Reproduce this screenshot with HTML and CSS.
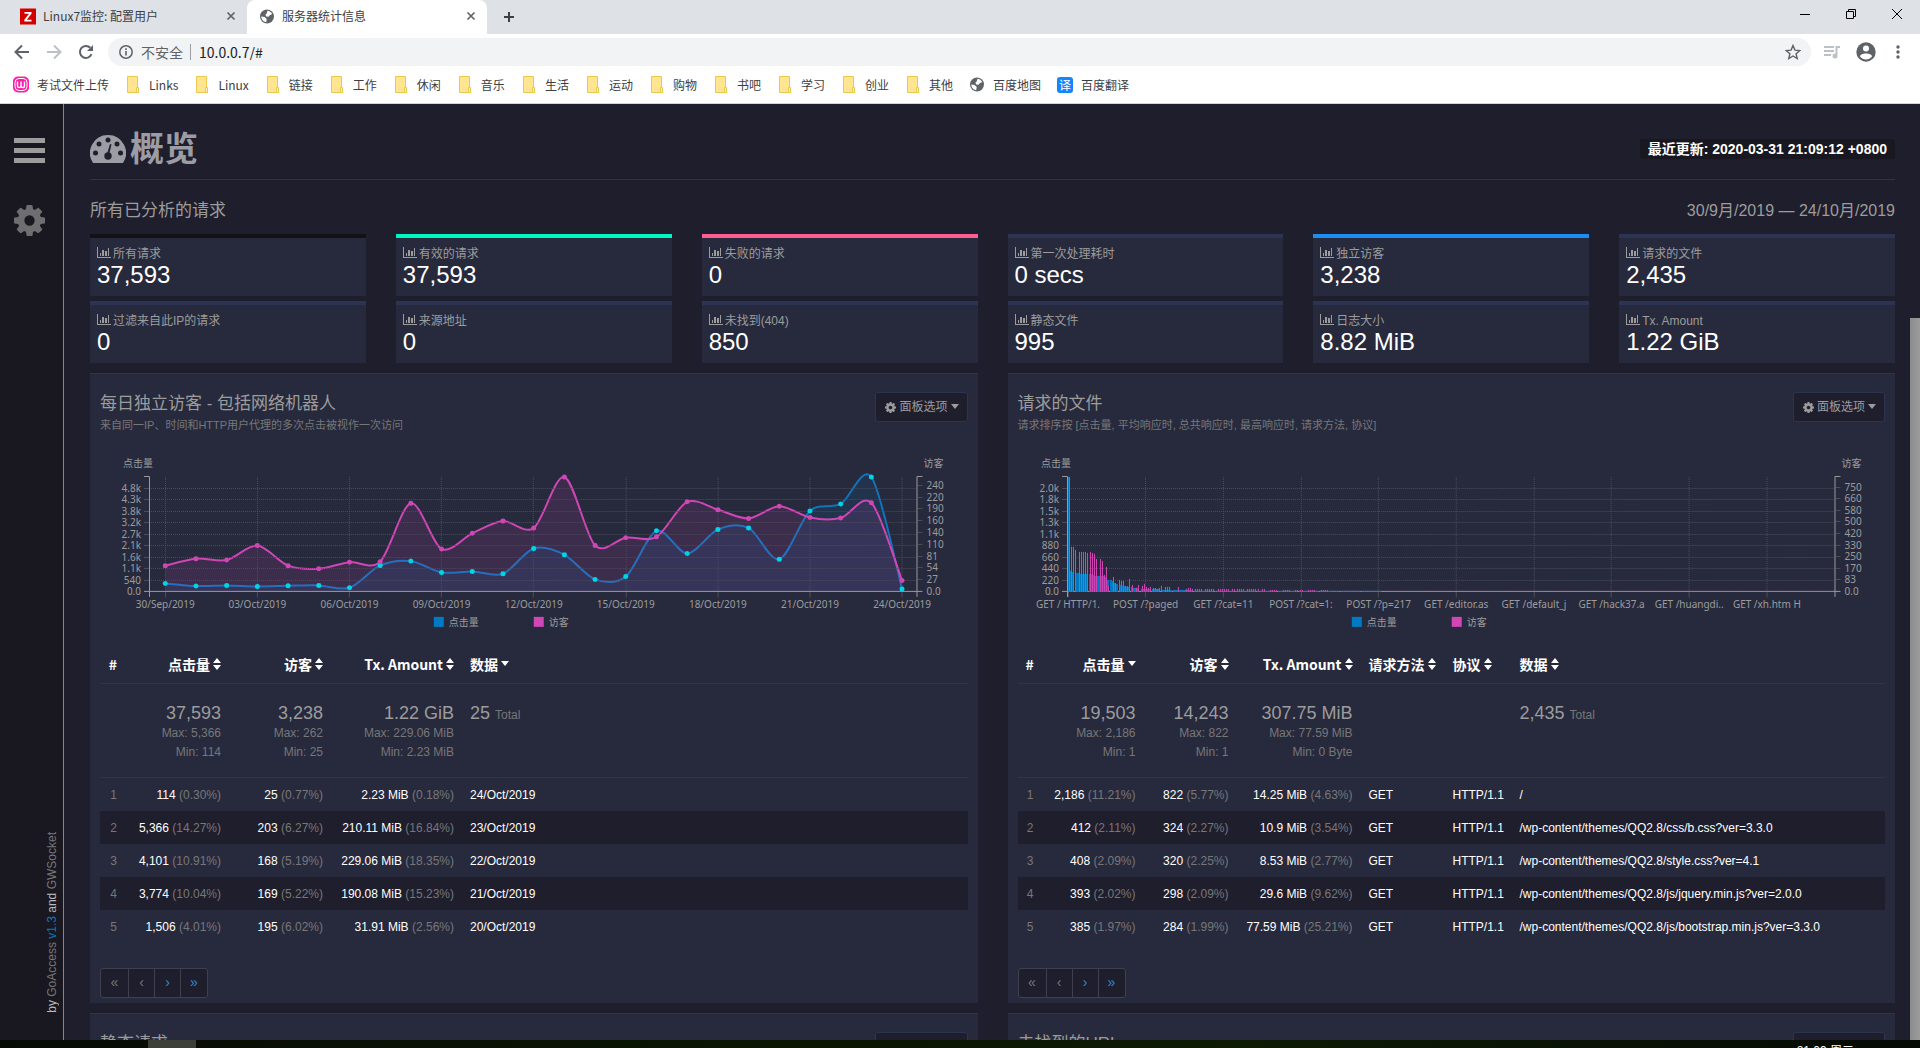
FILE: index.html
```html
<!DOCTYPE html>
<html lang="zh-CN">
<head>
<meta charset="utf-8">
<title>服务器统计信息</title>
<link rel="stylesheet" href="styles.css">
</head>
<body>
<svg class="defs" aria-hidden="true">
  <symbol id="i-cog" viewBox="128 128 1536 1536"><path d="M1152 896q0-106-75-181t-181-75-181 75-75 181 75 181 181 75 181-75 75-181zm512-109v222q0 12-8 23t-20 13l-185 28q-19 54-39 91 35 50 107 138 10 12 10 25t-9 23q-27 37-99 108t-94 71q-12 0-26-9l-138-108q-44 23-91 38-16 136-29 186-7 28-36 28h-222q-14 0-24.500-8.500t-11.500-21.500l-28-184q-49-16-90-37l-141 107q-10 9-25 9-14 0-25-11-126-114-165-168-7-10-7-23 0-12 8-23 15-21 51-66.500t54-70.500q-27-50-41-99l-183-27q-13-2-21-12.500t-8-23.500v-222q0-12 8-23t19-13l186-28q14-46 39-92-40-57-107-138-10-12-10-24 0-10 9-23 26-36 98.500-107.500t94.500-71.500q13 0 26 10l138 107q44-23 91-38 16-136 29-186 7-28 36-28h222q14 0 24.500 8.500t11.500 21.500l28 184q49 16 90 37l142-107q9-9 24-9 13 0 25 10 129 119 165 170 7 8 7 22 0 12-8 23-15 21-51 66.500t-54 70.500q26 50 41 98l183 28q13 2 21 12.500t8 23.500z"/></symbol>
  <symbol id="i-bars" viewBox="0 0 14 11"><path d="M0 0h1v10h13v1H0zM3 6h1v3H3zM5 3h2v6H5zM8 4h2v5H8zM11 1h1v8h-1z"/></symbol>
  <symbol id="i-folder" viewBox="0 0 16 17"><path d="M2.500.5h10v13l1 3h-11z" fill="#ffe592" stroke="#ecc84c"/><path d="M11.500 11.500h2v5h-2z" fill="#fff0b8" stroke="#ecc84c"/></symbol>
  <symbol id="i-globe" viewBox="0 0 16 16"><circle cx="8" cy="8" r="7" fill="#5f6368"/><path d="M8.500 2.200c2 .2 3.800 1.500 4.700 3.300l-2.400 1.200-1.300 1.600-2.300-.3-.8-1.700 1.300-1.400z" fill="#fff"/><path d="M2.200 8l3.500.6 2 2-.5 3.100C4.300 13.300 2.200 11 2.200 8z" fill="#fff"/></symbol>
  <symbol id="i-x" viewBox="0 0 10 10"><path d="M1.500 1.500l7 7M8.500 1.500l-7 7" fill="none" stroke="currentColor" stroke-width="1.700"/></symbol>
  <symbol id="i-sort" viewBox="0 0 8 12"><path d="M4 0l4 5H0zM0 7h8l-4 5z"/></symbol>
  <symbol id="i-down" viewBox="0 0 8 12"><path d="M0 3h8l-4 5z"/></symbol>
</svg>

<header class="browser">
  <div class="tabs">
    <div class="tab">
      <svg class="fav" viewBox="0 0 16 16"><path d="M0 0h16v16H0z" fill="#d40000"/><path d="M4.500 3.500h7v1.700l-4.700 6h4.700v1.800h-7.200v-1.700l4.700-6H4.500z" fill="#fff"/></svg>
      <span class="tab-title">Linux7监控: 配置用户</span>
      <button class="plain" aria-label="关闭"><svg width="10" height="10"><use href="#i-x"/></svg></button>
    </div>
    <div class="tab active">
      <svg class="fav"><use href="#i-globe"/></svg>
      <span class="tab-title">服务器统计信息</span>
      <button class="plain" aria-label="关闭"><svg width="10" height="10"><use href="#i-x"/></svg></button>
    </div>
    <button class="plain new-tab" aria-label="新标签页"><svg width="12" height="12" viewBox="0 0 12 12"><path d="M6 1v10M1 6h10" stroke="#3c4043" stroke-width="2"/></svg></button>
    <div class="window-buttons">
      <button class="plain" aria-label="最小化"><svg width="10" height="10" viewBox="0 0 10 10"><path d="M0 5.500h10" stroke="#000"/></svg></button>
      <button class="plain" aria-label="还原"><svg width="10" height="10" viewBox="0 0 10 10"><path d="M.5 2.500h7v7h-7zM2.500 2.500v-2h7v7h-2" fill="none" stroke="#000"/></svg></button>
      <button class="plain" aria-label="关闭窗口"><svg width="10" height="10" viewBox="0 0 10 10"><path d="M0 0l10 10M10 0L0 10" stroke="#000"/></svg></button>
    </div>
  </div>
  <div class="toolbar">
    <button class="plain nav" aria-label="后退"><svg width="16" height="16" viewBox="0 0 16 16"><path d="M15 8H2M8 1.500L1.500 8 8 14.500" fill="none" stroke="#5f6368" stroke-width="2"/></svg></button>
    <button class="plain nav" aria-label="前进"><svg width="16" height="16" viewBox="0 0 16 16"><path d="M1 8h13M8 1.500L14.500 8 8 14.500" fill="none" stroke="#bdc1c6" stroke-width="2"/></svg></button>
    <button class="plain nav" aria-label="重新加载"><svg width="16" height="16" viewBox="0 0 16 16"><path d="M13.500 10.200A6 6 0 1 1 12.300 3.800" fill="none" stroke="#5f6368" stroke-width="2"/><path d="M15 1v6H9z" fill="#5f6368"/></svg></button>
    <div class="omnibox">
      <svg width="14" height="14" viewBox="0 0 14 14"><circle cx="7" cy="7" r="6.200" fill="none" stroke="#5f6368" stroke-width="1.500"/><path d="M6.200 3.300h1.600v1.600H6.200zM6.200 6h1.600v4.500H6.200z" fill="#5f6368"/></svg>
      <label for="url">不安全</label>
      <input id="url" type="text" value="10.0.0.7/#">
      <button class="plain" aria-label="添加书签"><svg width="16" height="16" viewBox="0 0 16 16"><path d="M8 1.500l1.900 4.600 4.900.4-3.700 3.200 1.100 4.800L8 12l-4.200 2.500 1.100-4.800L1.200 6.500l4.900-.4z" fill="none" stroke="#5f6368" stroke-width="1.400"/></svg></button>
    </div>
    <button class="plain" aria-label="播放列表"><svg width="16" height="14" viewBox="0 0 16 14"><path d="M0 2h10M0 6h10M0 10h7M16 2h-3.500v8" fill="none" stroke="#bdc1c6" stroke-width="2"/><circle cx="11" cy="11" r="2.500" fill="#bdc1c6"/></svg></button>
    <button class="plain" aria-label="用户"><svg width="20" height="20" viewBox="0 0 20 20"><circle cx="10" cy="10" r="9.700" fill="#5f6368"/><circle cx="10" cy="6.500" r="3" fill="#fff"/><path d="M4 14.500c0-4 12-4 12 0-3 4-9 4-12 0z" fill="#fff"/></svg></button>
    <button class="plain menu" aria-label="菜单"><svg width="4" height="14" viewBox="0 0 4 14"><g fill="#5f6368"><circle cx="2" cy="2" r="1.700"/><circle cx="2" cy="7" r="1.700"/><circle cx="2" cy="12" r="1.700"/></g></svg></button>
  </div>
  <nav class="bookmarks">
    <a href="#"><svg class="fav" viewBox="0 0 16 16"><rect width="16" height="16" rx="5" fill="#f91fa8"/><rect x="2" y="2" width="12" height="12" rx="4" fill="none" stroke="#fff"/><path d="M4.500 5v4.500q0 1.500 1.700 1.500T8 9.500V5v4.500Q8 11 9.800 11t1.700-1.500V5" fill="none" stroke="#fff" stroke-width="1.400"/></svg>考试文件上传</a>
    <a href="#"><svg class="fav"><use href="#i-folder"/></svg>Links</a>
    <a href="#"><svg class="fav"><use href="#i-folder"/></svg>Linux</a>
    <a href="#"><svg class="fav"><use href="#i-folder"/></svg>链接</a>
    <a href="#"><svg class="fav"><use href="#i-folder"/></svg>工作</a>
    <a href="#"><svg class="fav"><use href="#i-folder"/></svg>休闲</a>
    <a href="#"><svg class="fav"><use href="#i-folder"/></svg>音乐</a>
    <a href="#"><svg class="fav"><use href="#i-folder"/></svg>生活</a>
    <a href="#"><svg class="fav"><use href="#i-folder"/></svg>运动</a>
    <a href="#"><svg class="fav"><use href="#i-folder"/></svg>购物</a>
    <a href="#"><svg class="fav"><use href="#i-folder"/></svg>书吧</a>
    <a href="#"><svg class="fav"><use href="#i-folder"/></svg>学习</a>
    <a href="#"><svg class="fav"><use href="#i-folder"/></svg>创业</a>
    <a href="#"><svg class="fav"><use href="#i-folder"/></svg>其他</a>
    <a href="#"><svg class="fav"><use href="#i-globe"/></svg>百度地图</a>
    <a href="#"><span class="fav yi">译</span>百度翻译</a>
  </nav>
</header>

<div class="page">
  <aside class="sidebar">
    <button class="plain" aria-label="导航"><svg width="31" height="25" viewBox="0 0 31 25"><path d="M0 0h31v5H0zM0 10h31v5H0zM0 20h31v5H0z" fill="#9c9c9c"/></svg></button>
    <button class="plain gear" aria-label="设置"><svg width="31" height="31"><use href="#i-cog"/></svg></button>
    <p class="credit">by <a href="#">GoAccess</a> <a href="#" class="ver">v1.3</a> and <a href="#">GWSocket</a></p>
  </aside>

  <main class="main">
    <div class="page-head">
      <h1><svg width="36" height="28" viewBox="0 0 36 28"><path d="M18 0A18 18 0 0 0 3 28H33A18 18 0 0 0 18 0z" fill="#9c9ca4"/><g fill="#1f1e2d"><circle cx="5.500" cy="18" r="2.500"/><circle cx="9" cy="9" r="2.500"/><circle cx="18" cy="5" r="2.500"/><circle cx="27" cy="9" r="2.500"/><circle cx="30.500" cy="18" r="2.500"/><circle cx="18" cy="21" r="3.700"/><path d="M17 19l3-10 1.500.5L19 20z"/></g></svg>概览</h1>
      <span class="updated">最近更新: 2020-03-31 21:09:12 +0800</span>
    </div>
    <div class="range"><h2>所有已分析的请求</h2><span>30/9月/2019 — 24/10月/2019</span></div>

    <section class="stats">
      <div class="stat black"><span><svg><use href="#i-bars"/></svg>所有请求</span><b>37,593</b></div>
      <div class="stat green"><span><svg><use href="#i-bars"/></svg>有效的请求</span><b>37,593</b></div>
      <div class="stat red"><span><svg><use href="#i-bars"/></svg>失败的请求</span><b>0</b></div>
      <div class="stat"><span><svg><use href="#i-bars"/></svg>第一次处理耗时</span><b>0 secs</b></div>
      <div class="stat blue"><span><svg><use href="#i-bars"/></svg>独立访客</span><b>3,238</b></div>
      <div class="stat"><span><svg><use href="#i-bars"/></svg>请求的文件</span><b>2,435</b></div>
      <div class="stat"><span><svg><use href="#i-bars"/></svg>过滤来自此IP的请求</span><b>0</b></div>
      <div class="stat"><span><svg><use href="#i-bars"/></svg>来源地址</span><b>0</b></div>
      <div class="stat"><span><svg><use href="#i-bars"/></svg>未找到(404)</span><b>850</b></div>
      <div class="stat"><span><svg><use href="#i-bars"/></svg>静态文件</span><b>995</b></div>
      <div class="stat"><span><svg><use href="#i-bars"/></svg>日志大小</span><b>8.82 MiB</b></div>
      <div class="stat"><span><svg><use href="#i-bars"/></svg>Tx. Amount</span><b>1.22 GiB</b></div>
    </section>

    <div class="panels">
      <section class="panel">
        <header class="panel-head">
          <div><h3>每日独立访客 - 包括网络机器人</h3><p>来自同一IP、时间和HTTP用户代理的多次点击被视作一次访问</p></div>
          <button class="options"><svg class="cog"><use href="#i-cog"/></svg>面板选项<svg class="caret"><use href="#i-down"/></svg></button>
        </header>
        <svg class="chart" id="chart-visitors" viewBox="0 0 868 190" role="img" aria-label="每日独立访客"></svg>
        <table class="visitors">
          <colgroup><col class="c-n"><col class="c-hits"><col class="c-vis"><col class="c-amt"><col></colgroup>
          <thead>
            <tr><th class="r">#</th><th class="r">点击量<svg><use href="#i-sort"/></svg></th><th class="r">访客<svg><use href="#i-sort"/></svg></th><th class="r">Tx. Amount<svg><use href="#i-sort"/></svg></th><th>数据<svg><use href="#i-down"/></svg></th></tr>
          </thead>
          <tbody>
            <tr class="sum"><td></td><td class="r"><b>37,593</b><i>Max: 5,366</i><i>Min: 114</i></td><td class="r"><b>3,238</b><i>Max: 262</i><i>Min: 25</i></td><td class="r"><b>1.22 GiB</b><i>Max: 229.06 MiB</i><i>Min: 2.23 MiB</i></td><td><b>25 <small>Total</small></b></td></tr>
            <tr><td class="r"><em>1</em></td><td class="r">114 <em>(0.30%)</em></td><td class="r">25 <em>(0.77%)</em></td><td class="r">2.23 MiB <em>(0.18%)</em></td><td>24/Oct/2019</td></tr>
            <tr class="alt"><td class="r"><em>2</em></td><td class="r">5,366 <em>(14.27%)</em></td><td class="r">203 <em>(6.27%)</em></td><td class="r">210.11 MiB <em>(16.84%)</em></td><td>23/Oct/2019</td></tr>
            <tr><td class="r"><em>3</em></td><td class="r">4,101 <em>(10.91%)</em></td><td class="r">168 <em>(5.19%)</em></td><td class="r">229.06 MiB <em>(18.35%)</em></td><td>22/Oct/2019</td></tr>
            <tr class="alt"><td class="r"><em>4</em></td><td class="r">3,774 <em>(10.04%)</em></td><td class="r">169 <em>(5.22%)</em></td><td class="r">190.08 MiB <em>(15.23%)</em></td><td>21/Oct/2019</td></tr>
            <tr><td class="r"><em>5</em></td><td class="r">1,506 <em>(4.01%)</em></td><td class="r">195 <em>(6.02%)</em></td><td class="r">31.91 MiB <em>(2.56%)</em></td><td>20/Oct/2019</td></tr>
          </tbody>
        </table>
        <nav class="pager"><a href="#" class="off">«</a><a href="#" class="off">‹</a><a href="#">›</a><a href="#">»</a></nav>
      </section>

      <section class="panel">
        <header class="panel-head">
          <div><h3>请求的文件</h3><p>请求排序按 [点击量, 平均响应时, 总共响应时, 最高响应时, 请求方法, 协议]</p></div>
          <button class="options"><svg class="cog"><use href="#i-cog"/></svg>面板选项<svg class="caret"><use href="#i-down"/></svg></button>
        </header>
        <svg class="chart" id="chart-requests" viewBox="0 0 868 190" role="img" aria-label="请求的文件"></svg>
        <table class="requests">
          <colgroup><col class="c-n"><col class="c-hits"><col class="c-vis"><col class="c-amt"><col class="c-mtd"><col class="c-pro"><col></colgroup>
          <thead>
            <tr><th class="r">#</th><th class="r">点击量<svg><use href="#i-down"/></svg></th><th class="r">访客<svg><use href="#i-sort"/></svg></th><th class="r">Tx. Amount<svg><use href="#i-sort"/></svg></th><th>请求方法<svg><use href="#i-sort"/></svg></th><th>协议<svg><use href="#i-sort"/></svg></th><th>数据<svg><use href="#i-sort"/></svg></th></tr>
          </thead>
          <tbody>
            <tr class="sum"><td></td><td class="r"><b>19,503</b><i>Max: 2,186</i><i>Min: 1</i></td><td class="r"><b>14,243</b><i>Max: 822</i><i>Min: 1</i></td><td class="r"><b>307.75 MiB</b><i>Max: 77.59 MiB</i><i>Min: 0 Byte</i></td><td></td><td></td><td><b>2,435 <small>Total</small></b></td></tr>
            <tr><td class="r"><em>1</em></td><td class="r">2,186 <em>(11.21%)</em></td><td class="r">822 <em>(5.77%)</em></td><td class="r">14.25 MiB <em>(4.63%)</em></td><td>GET</td><td>HTTP/1.1</td><td>/</td></tr>
            <tr class="alt"><td class="r"><em>2</em></td><td class="r">412 <em>(2.11%)</em></td><td class="r">324 <em>(2.27%)</em></td><td class="r">10.9 MiB <em>(3.54%)</em></td><td>GET</td><td>HTTP/1.1</td><td>/wp-content/themes/QQ2.8/css/b.css?ver=3.3.0</td></tr>
            <tr><td class="r"><em>3</em></td><td class="r">408 <em>(2.09%)</em></td><td class="r">320 <em>(2.25%)</em></td><td class="r">8.53 MiB <em>(2.77%)</em></td><td>GET</td><td>HTTP/1.1</td><td>/wp-content/themes/QQ2.8/style.css?ver=4.1</td></tr>
            <tr class="alt"><td class="r"><em>4</em></td><td class="r">393 <em>(2.02%)</em></td><td class="r">298 <em>(2.09%)</em></td><td class="r">29.6 MiB <em>(9.62%)</em></td><td>GET</td><td>HTTP/1.1</td><td>/wp-content/themes/QQ2.8/js/jquery.min.js?ver=2.0.0</td></tr>
            <tr><td class="r"><em>5</em></td><td class="r">385 <em>(1.97%)</em></td><td class="r">284 <em>(1.99%)</em></td><td class="r">77.59 MiB <em>(25.21%)</em></td><td>GET</td><td>HTTP/1.1</td><td>/wp-content/themes/QQ2.8/js/bootstrap.min.js?ver=3.3.0</td></tr>
          </tbody>
        </table>
        <nav class="pager"><a href="#" class="off">«</a><a href="#" class="off">‹</a><a href="#">›</a><a href="#">»</a></nav>
      </section>

      <section class="panel">
        <header class="panel-head"><div><h3>静态请求</h3></div><button class="options"><svg class="cog"><use href="#i-cog"/></svg>面板选项<svg class="caret"><use href="#i-down"/></svg></button></header>
      </section>
      <section class="panel">
        <header class="panel-head"><div><h3>未找到的URLs</h3></div><button class="options"><svg class="cog"><use href="#i-cog"/></svg>面板选项<svg class="caret"><use href="#i-down"/></svg></button></header>
      </section>
    </div>
  </main>
  <div class="scrollbar"><div class="thumb"></div></div>
</div>
<footer class="taskbar"><div class="task"></div><time>21:09 周二</time></footer>
<script src="charts.js"></script>
</body>
</html>
```
FILE: styles.css
```css
* { box-sizing: border-box; }
body {
  margin: 0;
  height: 100vh;
  display: flex;
  flex-direction: column;
  overflow: hidden;
  background: #1f1e2d;
  color: #9c9c9c;
  font: 12px/16px "Liberation Sans", "Noto Sans CJK SC", sans-serif;
}
h1, h2, h3, p { margin: 0; font-weight: 400; }
a { color: inherit; text-decoration: none; }
svg { display: block; flex: none; }
.defs { display: none; }
.plain { border: 0; padding: 0; background: none; color: #5f6368; }

/* browser window */
.browser {
  flex: none;
  background: #fff;
  color: #3c4043;
  font-family: "Noto Sans CJK SC", sans-serif;
  border-bottom: 1px solid #c9dbd9;
}
.tabs { display: flex; align-items: center; height: 34px; background: #dee1e6; }
.tab { display: flex; align-items: center; gap: 7px; width: 240px; height: 34px; padding: 0 11px 2px 12px; }
.tab:first-child { width: 247px; padding-left: 20px; }
.tab.active { background: #fff; border-radius: 8px 8px 0 0; }
.tab-title { flex: 1; }
.fav { width: 16px; height: 17px; flex: none; }
.new-tab { margin-left: 16px; }
.window-buttons { display: flex; gap: 36px; margin-left: auto; padding: 0 18px 6px 0; }
.toolbar { display: flex; align-items: center; height: 36px; padding: 0 20px 0 14px; gap: 16px; }
.omnibox { flex: 1; display: flex; align-items: center; height: 28px; margin: 0 -3px 0 -2px; padding: 0 10px 0 11px; gap: 8px; border-radius: 14px; background: #f1f3f4; }
.omnibox label { font-size: 14px; color: #5f6368; padding-right: 7px; border-right: 1px solid #9aa0a6; }
.omnibox input { flex: 1; border: 0; padding: 0; background: none; color: #202124; font: 14px/16px "Noto Sans CJK SC", sans-serif; outline: 0; }
.toolbar .menu { margin-left: 4px; }
.bookmarks { display: flex; align-items: center; height: 33px; padding: 0 13px 4px; gap: 16px; }
.bookmarks a { display: flex; align-items: center; gap: 8px; }
.yi { height: 16px; border-radius: 3px; background: #1684fc; color: #fff; font-size: 12px; text-align: center; }

/* dashboard */
.page { flex: 1; display: grid; grid-template-columns: 64px 1fr 10px; min-height: 0; overflow: hidden; }
.sidebar {
  display: flex;
  flex-direction: column;
  align-items: flex-start;
  gap: 42px;
  padding: 34px 0 27px 14px;
  background: #191820;
  border-right: 1px solid #e04bc6;
}
.gear { fill: #6e6e70; }
.credit { align-self: flex-end; margin: auto 3px 0 0; writing-mode: vertical-rl; transform: rotate(180deg); color: #bbb; white-space: nowrap; }
.credit a { color: #777; }
.credit .ver { color: #007bc3; }
.main { padding: 0 15px 0 26px; min-width: 0; min-height: 0; overflow: hidden; }
.page-head { display: flex; align-items: center; justify-content: space-between; height: 76px; padding-top: 15px; border-bottom: 1px solid #2c3353; }
h1 { display: flex; align-items: center; gap: 4px; font-size: 34px; line-height: 40px; font-weight: 700; color: #9c9ca4; }
.updated { padding: 2px 8px; border-radius: 3px; background: #191820; color: #fff; font-size: 14px; font-weight: 700; }
.range { display: flex; align-items: center; justify-content: space-between; height: 54px; padding-top: 7px; font-size: 16px; }
h2 { font-size: 17px; line-height: 20px; }
.stats { display: grid; grid-template-columns: repeat(6, 1fr); gap: 5px 30px; }
.stat { padding: 8px 7px; background: #272a3d; border-top: 4px solid #2c3353; }
.stat span { display: flex; align-items: center; gap: 2px; }
.stat svg { width: 14px; height: 11px; margin-bottom: 3px; fill: #9c9c9c; }
.stat b { display: block; font-size: 24px; line-height: 26px; font-weight: 400; color: #fff; }
.stat.black { border-color: #101214; }
.stat.green { border-color: #00f5c4; }
.stat.red { border-color: #ff5c8f; }
.stat.blue { border-color: #1c8ef2; }

.panels { display: grid; grid-template-columns: 1fr 1fr; gap: 10px 30px; margin-top: 10px; }
.panel { min-width: 0; padding: 18px 10px 5px; background: #272a3d; border-top: 1px solid #2c3353; }
.panel-head { display: flex; justify-content: space-between; align-items: flex-start; height: 42px; margin-bottom: 10px; }
h3 { font-size: 17px; line-height: 24px; }
.panel-head p { font-size: 11px; line-height: 18px; color: #777; }
.options { display: flex; align-items: center; gap: 3px; height: 30px; padding: 0 8px 0 9px; border: 1px solid #2c3353; border-radius: 3px; background: #1f1e2d; color: #9c9c9c; font: inherit; }
.options svg { fill: #9c9c9c; }
.cog { width: 11px; height: 11px; }
.caret { width: 8px; height: 12px; }
.chart { width: 100%; height: auto; margin-bottom: 13px; overflow: visible; font: 10px "Noto Sans", "Noto Sans CJK SC", sans-serif; fill: #9c9c9c; }
.grid { stroke: #4e4e55; stroke-dasharray: 1 1; }
.tick { stroke: #4e4e55; }
.axis { stroke: #9c9c9c; fill: none; }
.line-hits { stroke: #1173bd; stroke-width: 2; fill: none; }
.line-vis { stroke: #d046b4; stroke-width: 2; fill: none; }
.area-hits { fill: #007bc3; fill-opacity: .12; }
.area-vis { fill: #d046b4; fill-opacity: .12; }
.dot-hits { fill: #00d5e5; }
.fill-hits { fill: #007bc3; }
.fill-vis { fill: #d046b4; }

table { width: 100%; table-layout: fixed; border-collapse: separate; border-spacing: 0; color: #fff; white-space: nowrap; }
.c-n { width: 25px; }
.requests .c-n { width: 24px; }
.visitors .c-hits { width: 104px; }
.visitors .c-vis { width: 102px; }
.visitors .c-amt { width: 131px; }
.requests .c-hits { width: 102px; }
.requests .c-vis { width: 93px; }
.requests .c-amt { width: 124px; }
.c-mtd { width: 84px; }
.c-pro { width: 67px; }
th { height: 37px; padding: 0 8px 1px; border-bottom: 1px solid #2c3353; text-align: left; font: 700 14px/20px "Noto Sans CJK SC", sans-serif; }
th svg { display: inline-block; width: 8px; height: 12px; margin-left: 3px; fill: #fff; }
td { height: 33px; padding: 2px 8px 0; text-align: left; }
th.r, td.r { text-align: right; }
.alt td { background: #1f1e2d; }
em { font-style: normal; color: #777; }
.sum td { height: 94px; padding: 18px 8px 15px; vertical-align: top; border-bottom: 1px solid #2c3353; color: #9c9c9c; }
.sum b { display: block; font-size: 18px; line-height: 22px; font-weight: 400; }
.sum i { display: block; line-height: 19px; font-style: normal; color: #777; }
.sum small { font-size: 12px; color: #777; }
.pager { display: inline-flex; height: 30px; margin-top: 25px; border: 1px solid #3d404e; border-radius: 3px; background: #1f1e2d; color: #3487d0; font-size: 14px; vertical-align: top; }
.pager a { width: 26px; line-height: 26px; text-align: center; }
.pager a:first-child, .pager a:last-child { width: 27px; }
.pager a + a { border-left: 1px solid #3d404e; }
.pager .off { color: #777; }
.scrollbar { padding-top: 214px; display: flex; }
.thumb { flex: 1; background: linear-gradient(90deg, #8c8c8c, #9c9c9c); }
.taskbar { flex: none; display: flex; height: 8px; overflow: hidden; background: linear-gradient(90deg, #070b06, #0a1502 40%, #0d1a04 65%, #050a04); color: #fff; }
.task { width: 48px; margin-left: 148px; background: #3c4038; }
.taskbar time { margin: 3px 66px 0 auto; }
```
FILE: charts.js
```js
(function () {
  var LEFT = 49, RIGHT = 817, TOP = 33, BASE = 147.5;

  function el(parent, name, attrs, text) {
    var n = document.createElementNS('http://www.w3.org/2000/svg', name);
    for (var k in attrs) n.setAttribute(k, attrs[k]);
    if (text) n.textContent = text;
    parent.appendChild(n);
    return n;
  }
  function crisp(v) { return Math.floor(v) + 0.5; }
  function scale(v, max) { return BASE - v / max * (BASE - TOP); }

  function frame(svg, o) {
    o.left.forEach(function (t, i) {
      var y = crisp(BASE - i * 11.5);
      if (i) {
        el(svg, 'path', { 'class': 'grid', d: 'M' + LEFT + ' ' + y + 'H' + RIGHT });
        el(svg, 'path', { 'class': 'tick', d: 'M44 ' + y + 'h5' });
      }
      el(svg, 'text', { x: 41, y: y + 4, 'text-anchor': 'end' }, t);
    });
    o.right.forEach(function (t, i) {
      var y = crisp(BASE - i * o.rightStep);
      if (i) el(svg, 'path', { 'class': 'tick', d: 'M818 ' + y + 'h5' });
      el(svg, 'text', { x: 827, y: y + 4 }, t);
    });
    o.bottom.forEach(function (t, i) {
      var x = o.x0 + i * o.xStep;
      if (crisp(x) > LEFT + 1) el(svg, 'path', { 'class': 'grid', d: 'M' + crisp(x) + ' ' + TOP + 'V' + BASE });
      el(svg, 'path', { 'class': 'tick', d: 'M' + crisp(x) + ' ' + BASE + 'v6' });
      el(svg, 'text', { x: x, y: 164, 'text-anchor': 'middle' }, t);
    });
    el(svg, 'text', { x: 38, y: 23, 'text-anchor': 'middle' }, '点击量');
    el(svg, 'text', { x: 834, y: 23, 'text-anchor': 'middle' }, '访客');
    [['fill-hits', 334, '点击量'], ['fill-vis', 434, '访客']].forEach(function (l) {
      el(svg, 'rect', { 'class': l[0], x: l[1], y: 173, width: 10, height: 10 });
      el(svg, 'text', { x: l[1] + 15, y: 182 }, l[2]);
    });
  }
  function axes(svg) {
    el(svg, 'path', { 'class': 'axis', d: 'M44 32.5H49.5V153M44 147.5H823M823 32.5H817.5V153' });
  }

  function cardinal(p) {
    var d = 'M' + p[0], k = 0.15;
    function tangent(i) {
      var a = p[Math.max(i - 1, 0)], b = p[Math.min(i + 1, p.length - 1)];
      return [k * (b[0] - a[0]), k * (b[1] - a[1])];
    }
    for (var i = 1; i < p.length; i++) {
      var s = tangent(i - 1), e = tangent(i);
      d += 'C' + [p[i - 1][0] + s[0], p[i - 1][1] + s[1], p[i][0] - e[0], p[i][1] - e[1], p[i][0], p[i][1]];
    }
    return d;
  }

  var daily = document.getElementById('chart-visitors');
  var hits = [375, 250, 280, 234, 265, 280, 170, 1217, 1420, 890, 936, 827, 2012, 1716, 562, 702, 2839, 1778, 2901, 2979, 1506, 3774, 4101, 5366, 114];
  var visitors = [59, 75, 72, 105, 59, 52, 67, 68, 202, 97, 133, 161, 145, 262, 105, 123, 125, 205, 187, 167, 195, 169, 168, 203, 25];
  function points(values, max) {
    return values.map(function (v, i) { return [65.3 + i * 30.72, scale(v, max)]; });
  }
  var series = [['hits', points(hits, 5366)], ['vis', points(visitors, 262)]];
  series.forEach(function (s) {
    el(daily, 'path', { 'class': 'area-' + s[0], d: cardinal(s[1]) + 'V' + BASE + 'H65.3Z' });
    el(daily, 'path', { 'class': 'line-' + s[0], d: cardinal(s[1]) });
  });
  frame(daily, {
    left: ['0.0', '540', '1.1k', '1.6k', '2.1k', '2.7k', '3.2k', '3.8k', '4.3k', '4.8k'],
    right: ['0.0', '27', '54', '81', '110', '140', '160', '190', '220', '240'], rightStep: 11.8,
    bottom: ['30/Sep/2019', '03/Oct/2019', '06/Oct/2019', '09/Oct/2019', '12/Oct/2019', '15/Oct/2019', '18/Oct/2019', '21/Oct/2019', '24/Oct/2019'],
    x0: 65.3, xStep: 92.16
  });
  axes(daily);
  series.forEach(function (s) {
    s[1].forEach(function (p) {
      el(daily, 'circle', { 'class': s[0] === 'hits' ? 'dot-hits' : 'fill-vis', cx: p[0], cy: p[1], r: 2.5 });
    });
  });

  var req = document.getElementById('chart-requests');
  frame(req, {
    left: ['0.0', '220', '440', '660', '880', '1.1k', '1.3k', '1.5k', '1.8k', '2.0k'],
    right: ['0.0', '83', '170', '250', '330', '420', '500', '580', '660', '750'], rightStep: 11.6,
    bottom: ['GET / HTTP/1.', 'POST /?paged', 'GET /?cat=11', 'POST /?cat=1:', 'POST /?p=217', 'GET /editor.as', 'GET /default_j', 'GET /hack37.a', 'GET /huangdi..', 'GET /xh.htm H'],
    x0: 50, xStep: 77.7
  });
  axes(req);
  var blue = [115, 21, 20, 0, 19, 19, 18, 18, 18, 18, 18, 18, 17, 16, 16, 16, 16, 16, 15, 12, 12, 11, 9, 8, 0, 7, 6, 6, 5, 5, 5, 4, 4, 4, 0, 3, 3, 3, 3, 3, 3, 3, 3, 3, 0, 2];
  var pink = [115, 45, 45, 42, 0, 40, 40, 40, 40, 39, 40, 39, 38, 33, 0, 33, 31, 17, 25, 6, 0, 15, 9, 0, 12, 11, 11, 6, 6, 13, 7, 0, 4, 7, 0, 6, 8, 5, 4, 5, 4, 4, 3, 4, 6, 0, 5, 5, 5, 0, 0, 0, 5, 0, 0, 0, 3, 4, 4, 3, 3, 3, 3, 3, 0, 3];
  for (var i = 0; i < 365; i++) {
    var x = Math.round(49.5 + i * 2.1);
    var b = i < blue.length ? blue[i] : i < 60 ? 2 : i < 150 ? 1 : 0;
    var v = i < pink.length ? pink[i] : i < 94 ? (i % 7 ? 3 : 1) : i < 125 ? (i % 6 < 4 ? 2 : 0) : 1;
    if (b) el(req, 'rect', { 'class': 'fill-hits', x: x, y: 148 - b, width: 2, height: b });
    if (v) el(req, 'rect', { 'class': 'fill-vis', x: x + 1, y: 148 - v, width: 1, height: v });
  }
})();
```
